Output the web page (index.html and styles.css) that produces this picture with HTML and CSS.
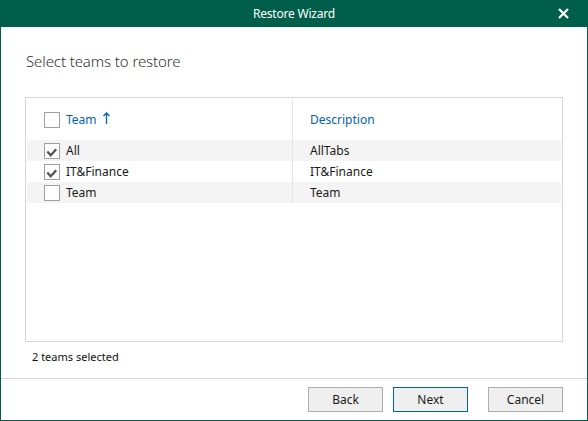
FILE: index.html
```html
<!DOCTYPE html>
<html lang="en">
<head>
    <meta charset="UTF-8">
    <title>Restore Wizard</title>
    <link rel="stylesheet" href="styles.css">
</head>
<body>
    <div class="window">
        <div class="titlebar">
            <span class="title">Restore Wizard</span>
            <svg class="close" width="11" height="11" viewBox="0 0 11 11">
                <path d="M1 1 L10 10 M10 1 L1 10" stroke="#fff" stroke-width="2.2" fill="none"/>
            </svg>
        </div>

        <div class="content">
            <h1 class="heading">Select teams to restore</h1>

            <div class="grid">
                <div class="row head">
                    <div class="cell first">
                        <span class="check"></span>
                        <span class="sort">Team</span>
                        <svg class="arrow" width="7" height="12" viewBox="0 0 7 12">
                            <path d="M3.5 1 V12 M0.5 4 L3.5 1 L6.5 4" stroke="#0063b1" stroke-width="1.3" fill="none"/>
                        </svg>
                    </div>
                    <div class="cell second"><span class="sort">Description</span></div>
                </div>
                <div class="row odd">
                    <div class="cell first">
                        <span class="check">
                            <svg viewBox="0 0 14 14"><path d="M2.3 7.5 L5.7 11.2 L11.2 5.2" stroke="#555" stroke-width="2.3" fill="none"/></svg>
                        </span>All
                    </div>
                    <div class="cell second">AllTabs</div>
                </div>
                <div class="row">
                    <div class="cell first">
                        <span class="check">
                            <svg viewBox="0 0 14 14"><path d="M2.3 7.5 L5.7 11.2 L11.2 5.2" stroke="#555" stroke-width="2.3" fill="none"/></svg>
                        </span>IT&amp;Finance
                    </div>
                    <div class="cell second">IT&amp;Finance</div>
                </div>
                <div class="row odd">
                    <div class="cell first"><span class="check"></span>Team</div>
                    <div class="cell second">Team</div>
                </div>
            </div>

            <div class="status">2 teams selected</div>
        </div>

        <div class="footer">
            <button class="btn">Back</button>
            <button class="btn focus">Next</button>
            <button class="btn cancel">Cancel</button>
        </div>
    </div>
</body>
</html>
```

FILE: styles.css
```css
* {
    margin: 0;
    padding: 0;
    box-sizing: border-box;
}
body {
    font-family: "Noto Sans", "Open Sans", sans-serif;
    font-size: 12px;
    color: #1a1a1a;
    background: #fff;
}
/* outer window */
.window {
    width: 588px;
    height: 421px;
    display: flex;
    flex-direction: column;
    border: 1px solid #005f4b;
    border-top: none;
}
.titlebar {
    height: 27px;
    margin: 0 -1px;
    background: #005f4b;
    color: #fff;
    display: flex;
    align-items: center;
    justify-content: center;
    position: relative;
}
.title {
    font-size: 12px;
    letter-spacing: -0.2px;
}
.close {
    position: absolute;
    right: 19px;
    top: 8px;
}
.content {
    flex: 1;
    padding: 24px 24px 0 24px;
}
.heading {
    font-size: 15px;
    font-weight: 300;
    color: #333;
    line-height: 20px;
    height: 46px;
    padding-left: 1px;
    letter-spacing: -0.1px;
}
/* team list */
.grid {
    width: 538px;
    height: 245px;
    border: 1px solid #d6d6d6;
    padding: 0 1px;
}
.row {
    display: flex;
    height: 21px;
    align-items: center;
}
.row.head {
    height: 42px;
    padding-top: 1px;
}
.row.odd {
    background: #f4f4f4;
}
.cell {
    height: 100%;
    display: flex;
    align-items: center;
}
.cell.first {
    width: 266px;
    padding-left: 17px;
    border-right: 1px solid #e4e4e4;
}
.cell.second {
    padding-left: 17px;
}
.sort {
    color: #0063b1;
}
.arrow {
    margin-left: 6px;
    margin-top: -4px;
}
.check {
    width: 16px;
    height: 16px;
    border: 1px solid #a0a0a0;
    background: #fff;
    margin-right: 6px;
    display: flex;
}
.check svg {
    width: 14px;
    height: 14px;
}
.status {
    margin-top: 7px;
    padding-left: 7px;
    font-size: 11px;
    line-height: 16px;
    color: #111;
}
/* bottom buttons */
.footer {
    height: 42px;
    border-top: 1px solid #d6d6d6;
    display: flex;
    justify-content: flex-end;
    padding: 8px 24px 0 0;
    gap: 10px;
}
.btn {
    width: 75px;
    height: 25px;
    font-family: inherit;
    font-size: 12px;
    color: #1a1a1a;
    background: #efefef;
    border: 1px solid #adadad;
}
.btn.focus {
    border-color: #0063b1;
}
.btn.cancel {
    margin-left: 10px;
}
```
